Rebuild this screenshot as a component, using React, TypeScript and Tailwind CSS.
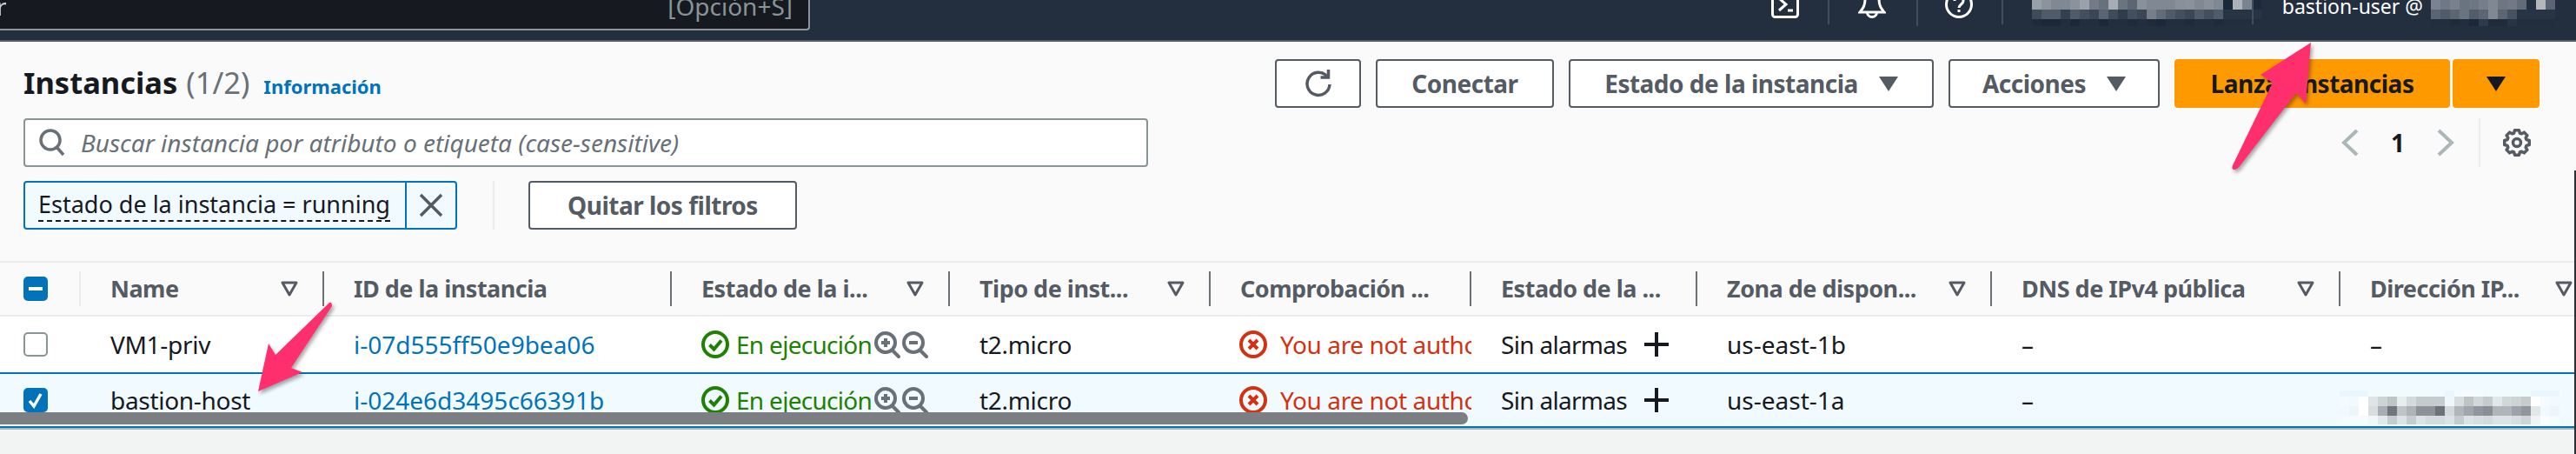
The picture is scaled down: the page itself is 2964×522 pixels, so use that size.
const top1 = [
  "#98a0a9 #8b939d #7f8893 #7f8893 #8a929c #9aa1aa #727b87 #67717e #a7acb4 #6a7480 #5c6673 #88909a #7f8893 #7f8893 #7f8893 #88909a #8a929c #7f8893 #88909a #7f8893 #19283a #adb1b8 #7a8390 #1c2b3b",
  "#3f4b59 #4f5b68 #4f5b68 #33404f #4f5b68 #434f5d #3b4755 #5a6472 #3f4b59 #2f3c4a #434f5d #3b4755 #757e89 #626c78 #4f5b68 #434f5d #3b4755 #4f5b68 #434f5d #4f5b68 #263443 #263443 #263443 #263443",
  "#1f2b39 #1c2838 #1c2838 #222e3d #1c2838 #222e3d #222e3d #1c2838 #222e3d #222e3d #1f2b39 #222e3d #1f2b39 #1c2838 #222e3d #222e3d #1f2b39 #222e3d #222e3d #1f2b39 #222e3d #222e3d #222e3d #222e3d",
];
const top2 = [
  "#7a8390 #6f7884 #79818d #6a7480 #6d7682 #767e8a #7f8893 #6d7682 #707985 #626c78 #243242 #b4b8bd #5a6472",
  "#5a6472 #4f5b68 #5c6673 #6a7480 #525d6b #5c6673 #7f8893 #5c6673 #46525f #263443 #263443 #263443 #263443",
  "#222e3d #222e3d #1f2b39 #222e3d #1c2838 #2d3a49 #1f2b39 #1f2b39 #263443 #222e3d #222e3d #222e3d #222e3d",
];
const ipBlur = [
  "#eaf6fd #eaf6fd #eaf6fd #f1faff #f1faff #f1faff #f1faff #f1faff #f1faff #f1faff #f1faff #eaf6fd #f5fbff #f5fcff #f5fcff #f1faff #f1faff #f1faff #f1faff #f1faff #eaf6fd #eaf6fd #eaf6fd",
  "#f5fbff #f1faff #ffffff #dfe4e6 #ced3d6 #bfc4c7 #e8edef #d5dadc #c6cbce #c6cbce #c6cbce #f0f7fa #d8dde0 #bfc4c7 #d2d7da #c6cbce #e2e7e9 #d2d7da #ced3d6 #c6cbce #ffffff #f5fbff #f1faff",
  "#f1faff #eef6fb #ffffff #d8dde0 #a6adb4 #6f767c #bfc4c7 #aeb3b8 #8b9298 #8b9298 #6b7278 #d2d9dc #b0b5b9 #9fa6ad #8f969d #888f96 #b0b5b9 #b0b5b9 #9ca3aa #8f969c #e2e7e9 #f1faff #eef6fb",
  "#f5fcff #f5fcff #f5fcff #f2f7fa #e2e7ea #c6cbce #dde2e4 #c6cbce #dde2e4 #d5dadc #d5dadc #dde2e4 #c6cbce #dde2e4 #d8dde0 #d5dadc #dde2e4 #dde2e4 #d8dde0 #cfd4d6 #eef3f5 #fbfdff #f5fcff",
];

const Mosaic = ({ rows, heights, className }: { rows: string[]; heights: number[]; className?: string }) => {
  const cols = rows[0].split(" ").length;
  let y = 0;
  return (
    <svg className={className} width={cols * 11} height={heights.reduce((a, b) => a + b, 0)} shapeRendering="crispEdges">
      {rows.map((row, r) => {
        const rowY = y;
        y += heights[r];
        return row.split(" ").map((c, i) => <rect key={i} x={i * 11} y={rowY} width={11} height={heights[r]} fill={c} />);
      })}
    </svg>
  );
};

const Caret = ({ fill = "#545b64" }: { fill?: string }) => (
  <svg width="22" height="17" viewBox="0 0 22 17" className="shrink-0">
    <path d="M0 0h22L11 17z" fill={fill} />
  </svg>
);

const Sort = () => (
  <svg width="20" height="18" viewBox="0 0 20 18" className="shrink-0">
    <path d="M2 2h16L10 16z" fill="none" stroke="#545b64" strokeWidth="3" strokeLinejoin="round" />
  </svg>
);

const Zoom = ({ plus }: { plus?: boolean }) => (
  <svg width="30" height="32" viewBox="0 0 30 32" className="shrink-0" fill="none" stroke="#687078" strokeWidth="4">
    <circle cx="13" cy="14" r="11" />
    <path d="M21 23l7 7" strokeLinecap="round" />
    <path d="M8 14h10" />
    {plus && <path d="M13 9v10" />}
  </svg>
);

const Ok = () => (
  <svg width="32" height="32" viewBox="0 0 32 32" className="shrink-0" fill="none" stroke="#1d8102" strokeWidth="4">
    <circle cx="16" cy="16" r="14" />
    <path d="M9.5 16.5l5 5 8.5-10" />
  </svg>
);

const Bad = () => (
  <svg width="32" height="32" viewBox="0 0 32 32" className="shrink-0" fill="none" stroke="#d13212" strokeWidth="4">
    <circle cx="16" cy="16" r="14" />
    <path d="M11 11l10 10M21 11L11 21" />
  </svg>
);

// cog outline, 8 teeth
const cogPath = () => {
  const pts: string[] = [];
  for (let i = 0; i < 8; i++) {
    const a = (i * Math.PI) / 4;
    [
      [-0.3, 11.5],
      [-0.17, 14.5],
      [0.17, 14.5],
      [0.3, 11.5],
    ].forEach(([d, r]) => {
      pts.push(`${(16 + r * Math.cos(a + d)).toFixed(2)} ${(16 + r * Math.sin(a + d)).toFixed(2)}`);
    });
  }
  return `M${pts.join("L")}z`;
};

const Check = ({ mode }: { mode: "none" | "some" | "all" }) => {
  if (mode === "none") return <div className="w-[28px] h-[28px] rounded-[5px] border-2 border-[#879596] bg-white" />;
  return (
    <div className="w-[28px] h-[28px] rounded-[5px] bg-[#0073bb] flex items-center justify-center">
      {mode === "some" ? (
        <div className="w-[16px] h-[4px] bg-white" />
      ) : (
        <svg width="20" height="20" viewBox="0 0 20 20" fill="none" stroke="white" strokeWidth="3.5">
          <path d="M3 11l5 6 8-14" />
        </svg>
      )}
    </div>
  );
};

const Button = ({ label, caret, className }: { label: string; caret?: boolean; className: string }) => (
  <button className={`h-[56px] rounded-[4px] border-2 border-[#545b64] bg-white text-[#545b64] font-bold tracking-[-0.5px] flex items-center justify-center gap-[24px] ${className}`}>
    {label}
    {caret && <Caret />}
  </button>
);

const headers = [
  { label: "Name", w: "w-[280px]" },
  { label: "ID de la instancia", w: "w-[400px]", noSort: true },
  { label: "Estado de la i...", w: "w-[320px]" },
  { label: "Tipo de inst...", w: "w-[300px]" },
  { label: "Comprobación ...", w: "w-[300px]", noSort: true },
  { label: "Estado de la ...", w: "w-[260px]", noSort: true },
  { label: "Zona de dispon...", w: "w-[339px]" },
  { label: "DNS de IPv4 pública", w: "w-[401px]" },
  { label: "Dirección IP...", w: "w-[297px]" },
];

const Cell = ({ w, children }: { w: string; children: React.ReactNode }) => (
  <div className={`${w} shrink-0 pl-[34px] flex items-center whitespace-nowrap overflow-hidden`}>{children}</div>
);

const Row = ({ name, id, zone, selected }: { name: string; id: string; zone: string; selected?: boolean }) => (
  <div className={`flex text-[#16191f] ${selected ? "h-[64px] bg-[#f1faff] border-y-2 border-[#0073bb]" : "h-[64px] bg-white"}`}>
    <div className="w-[93px] shrink-0 pl-[27px] flex items-center">
      <Check mode={selected ? "all" : "none"} />
    </div>
    <Cell w="w-[280px]">
      <span className="tracking-[-0.3px]">{name}</span>
    </Cell>
    <Cell w="w-[400px]">
      <span className="text-[#0073bb]">{id}</span>
    </Cell>
    <Cell w="w-[320px]">
      <Ok />
      <span className="ml-[8px] text-[#1d8102] tracking-[-0.7px]">En ejecución</span>
      <span className="ml-[3px] flex gap-[2px]">
        <Zoom plus />
        <Zoom />
      </span>
    </Cell>
    <Cell w="w-[300px]">
      <span className="tracking-[-0.3px]">t2.micro</span>
    </Cell>
    <div className="w-[300px] shrink-0 pl-[33px] flex items-center whitespace-nowrap overflow-hidden">
      <Bad />
      <span className="ml-[15px] text-[#d13212] tracking-[-0.4px]">You are not authorized</span>
    </div>
    <Cell w="w-[260px]">
      <span className="tracking-[-0.7px]">Sin alarmas</span>
      <svg width="30" height="30" viewBox="0 0 30 30" className="ml-[19px] shrink-0" stroke="#16191f" strokeWidth="4">
        <path d="M15 1v28M1 15h28" />
      </svg>
    </Cell>
    <Cell w="w-[339px]">{zone}</Cell>
    <Cell w="w-[401px]">–</Cell>
    <div className="w-[297px] shrink-0 pl-[34px] flex items-center">
      {selected ? <Mosaic rows={ipBlur} heights={[7, 11, 11, 10]} className="-ml-[35px] mt-[16px]" /> : "–"}
    </div>
  </div>
);

export default function App() {
  return (
    <div className="relative w-[2964px] h-[522px] overflow-hidden bg-[#f2f3f3] font-['Noto_Sans',sans-serif] text-[28px] leading-[36px]">
      {/* top bar */}
      <div className="h-[48px] bg-[#232f3e] border-b-2 border-[#545b64] flex items-start overflow-hidden text-white">
        <div className="w-[932px] h-[35px] bg-[#16191f] border-b-2 border-r-2 border-[#879596] rounded-br-[4px] flex justify-between items-end text-[#879596] pr-[18px]">
          <span className="text-white mb-[8px] -ml-[4px] opacity-80">r</span>
          <span className="mb-[8px]">[Opción+S]</span>
        </div>
        <div className="ml-auto flex items-start pr-[24px]">
          <svg width="32" height="32" viewBox="0 0 32 32" className="-mt-[11px]" fill="none" stroke="white" strokeWidth="3">
            <rect x="1.5" y="1.5" width="29" height="29" rx="3" />
            <path d="M9 9l8 7-8 7" />
            <path d="M19 23h6" />
          </svg>
          <div className="ml-[33px] w-[2px] h-[28px] bg-[#414d5c]" />
          <svg width="32" height="32" viewBox="0 0 32 32" className="ml-[33px] -mt-[11px]" fill="none" stroke="white" strokeWidth="3">
            <path d="M8 10c0 8-3 11-6 15h28c-3-4-6-7-6-15" />
            <path d="M10.5 25a5.5 5.5 0 0 0 11 0" />
          </svg>
          <div className="ml-[35px] w-[2px] h-[30px] bg-[#414d5c]" />
          <svg width="32" height="32" viewBox="0 0 32 32" className="ml-[31px] -mt-[11px]" fill="none" stroke="white" strokeWidth="3">
            <circle cx="16" cy="16" r="14.5" />
            <path d="M11 12c0-6 10-6 10 0 0 4-5 4-5 8" />
            <path d="M16 22v3" />
          </svg>
          <div className="ml-[33px] w-[2px] h-[28px] bg-[#414d5c]" />
          <Mosaic rows={top1} heights={[11, 11, 8]} className="ml-[33px]" />
          <div className="-ml-[11px] w-[2px] h-[28px] bg-[#414d5c]" />
          <span className="ml-[33px] -mt-[8px] text-[23px] leading-[30px]">bastion-user @</span>
          <Mosaic rows={top2} heights={[11, 11, 8]} className="ml-[9px]" />
        </div>
      </div>

      {/* page */}
      <div className="h-[444px] bg-[#fafafa] flex flex-col">
        <div className="pt-[20px] pl-[27px] pr-[42px]">
          <div className="flex justify-between h-[56px]">
            <div className="flex items-baseline pt-[9px]">
              <h1 className="text-[34.5px] font-bold text-[#16191f]">Instancias</h1>
              <span className="ml-[10px] text-[34.5px] text-[#687078]">(1/2)</span>
              <a className="ml-[16px] text-[22px] font-bold text-[#0073bb]">Información</a>
            </div>
            <div className="flex gap-[17px]">
              <button className="w-[99px] h-[56px] rounded-[4px] border-2 border-[#545b64] bg-white flex items-center justify-center">
                <svg width="32" height="34" viewBox="0 0 32 34" fill="none" stroke="#545b64" strokeWidth="3.5">
                  <path d="M26 9a13 13 0 1 0 3 9" />
                  <path d="M27.5 1v9h-9" />
                </svg>
              </button>
              <Button label="Conectar" className="w-[205px]" />
              <Button label="Estado de la instancia" caret className="w-[420px]" />
              <Button label="Acciones" caret className="w-[243px]" />
              <div className="flex gap-[3px]">
                <button className="w-[317px] h-[56px] rounded-[4px] bg-[#ff9900] text-[#16191f] font-bold tracking-[-0.5px]">Lanzar instancias</button>
                <button className="w-[100px] h-[56px] rounded-[4px] bg-[#ff9900] flex items-center justify-center">
                  <Caret fill="#16191f" />
                </button>
              </div>
            </div>
          </div>

          <div className="mt-[12px] flex justify-between h-[56px]">
            <div className="w-[1294px] border-2 border-[#879596] rounded-[4px] bg-white flex items-center pl-[15px]">
              <svg width="32" height="32" viewBox="0 0 32 32" fill="none" stroke="#687078" strokeWidth="3.5">
                <circle cx="14" cy="13" r="11" />
                <path d="M21 21l8 9" />
              </svg>
              <span className="ml-[17px] italic text-[#687078]">Buscar instancia por atributo o etiqueta (case-sensitive)</span>
            </div>
            <div className="flex items-center text-[#16191f]">
              <svg width="20" height="32" viewBox="0 0 20 32" fill="none" stroke="#aab7b8" strokeWidth="4">
                <path d="M18 2L3 16l15 14" />
              </svg>
              <span className="ml-[37px] font-bold">1</span>
              <svg width="20" height="32" viewBox="0 0 20 32" fill="none" stroke="#aab7b8" strokeWidth="4" className="ml-[37px]">
                <path d="M2 2l15 14L2 30" />
              </svg>
              <div className="ml-[28px] w-[2px] h-[56px] bg-[#eaeded]" />
              <svg width="32" height="32" viewBox="0 0 32 32" fill="none" stroke="#545b64" strokeWidth="3.5" strokeLinejoin="round" className="ml-[26px] mr-[10px]">
                <path d={cogPath()} />
                <circle cx="16" cy="16" r="4.5" />
              </svg>
            </div>
          </div>

          <div className="mt-[16px] flex items-center h-[56px]">
            <div className="w-[499px] h-[56px] border-2 border-[#0073bb] rounded-[4px] bg-[#f1faff] flex text-[#16191f]">
              <div className="w-[437px] pl-[15px] flex items-center whitespace-nowrap overflow-hidden">
                <span className="text-[27px] border-b-2 border-dashed border-[#16191f]">Estado de la instancia = running</span>
              </div>
              <div className="flex-1 border-l-2 border-[#0073bb] flex items-center justify-center">
                <svg width="28" height="28" viewBox="0 0 28 28" stroke="#545b64" strokeWidth="3.5">
                  <path d="M2 2l24 24M26 2L2 26" />
                </svg>
              </div>
            </div>
            <div className="ml-[41px] w-[2px] h-[56px] bg-[#eaeded]" />
            <Button label="Quitar los filtros" className="ml-[39px] w-[309px]" />
          </div>
        </div>

        {/* table */}
        <div className="mt-[36px]">
          <div className="h-[64px] border-y-2 border-[#eaeded] flex items-center text-[#545b64] text-[27px] font-bold tracking-[-0.5px]">
            <div className="w-[93px] shrink-0 pl-[27px] flex items-center justify-between h-[40px]">
              <Check mode="some" />
              <div className="w-[2px] h-[40px] bg-[#eaeded]" />
            </div>
            {headers.map((h) => (
              <div key={h.label} className={`${h.w} shrink-0 pl-[34px] flex items-center whitespace-nowrap`}>
                <span className="flex-1 overflow-hidden">{h.label}</span>
                {!h.noSort && <Sort />}
                <div className={`${h.noSort ? "" : "ml-[28px]"} w-[2px] h-[40px] bg-[#687078]`} />
              </div>
            ))}
          </div>
          <Row name="VM1-priv" id="i-07d555ff50e9bea06" zone="us-east-1b" />
          <Row name="bastion-host" id="i-024e6d3495c66391b" zone="us-east-1a" selected />
          <div className="h-[2px] bg-[#aab7b8]" />
        </div>
      </div>

      {/* scrollbar */}
      <div className="absolute left-0 top-[474px] w-[1689px] h-[14px] bg-[#7b7f82] rounded-r-[7px]" />
      <div className="absolute right-0 top-[196px] bottom-0 w-[2px] bg-[#2d2f33]" />

      {/* annotation arrows */}
      <svg className="absolute inset-0 pointer-events-none drop-shadow-[2px_3px_2px_rgba(0,0,0,0.35)]" width="2964" height="522" fill="#ff2f6e">
        <path d="M2659 49L2601 86 2615 95 2569 190Q2567 195 2571 195 2574 195 2577 191L2642 107 2653 119z" />
        <path d="M297 450L348 428 335 423 382 352Q382 347 379 348L317 408 309 395z" />
      </svg>
    </div>
  );
}
